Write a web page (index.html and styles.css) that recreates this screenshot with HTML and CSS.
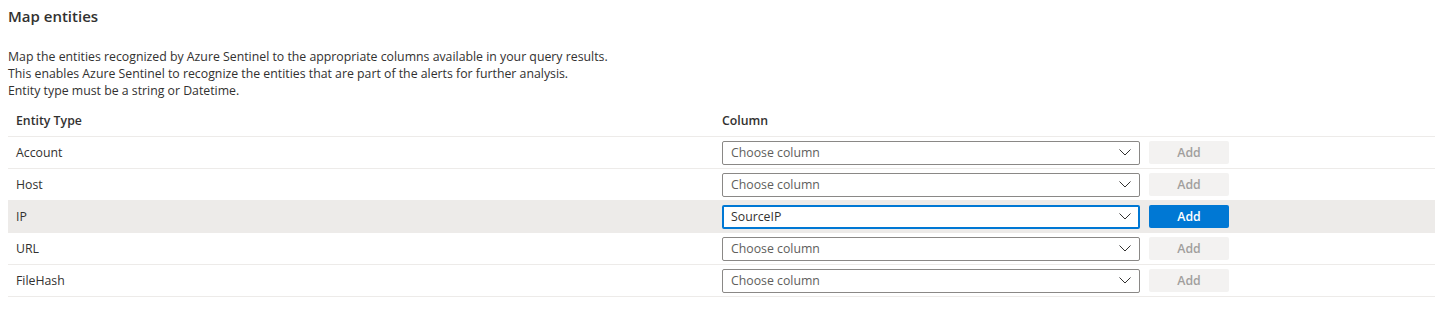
FILE: index.html
```html
<!DOCTYPE html>
<html lang="en">
<head>
    <meta charset="UTF-8">
    <title>Map entities</title>
    <link rel="stylesheet" href="styles.css">
</head>
<body>
    <div class="panel">
        <h2 class="title">Map entities</h2>
        <p class="desc">
            Map the entities recognized by Azure Sentinel to the appropriate columns available in your query results.<br>
            This enables Azure Sentinel to recognize the entities that are part of the alerts for further analysis.<br>
            Entity type must be a string or Datetime.
        </p>
        <div class="grid">
            <div class="row head">
                <div class="cell">Entity Type</div>
                <div class="cell">Column</div>
            </div>
            <div class="row">
                <div class="cell">Account</div>
                <div class="cell picker">
                    <div class="select"><span class="placeholder">Choose column</span><svg class="chev" width="12" height="7" viewBox="0 0 12 7"><path d="M0.5 0.5 L6 6 L11.5 0.5" fill="none" stroke="#323130" stroke-width="1"/></svg></div>
                    <button class="btn" disabled>Add</button>
                </div>
            </div>
            <div class="row">
                <div class="cell">Host</div>
                <div class="cell picker">
                    <div class="select"><span class="placeholder">Choose column</span><svg class="chev" width="12" height="7" viewBox="0 0 12 7"><path d="M0.5 0.5 L6 6 L11.5 0.5" fill="none" stroke="#323130" stroke-width="1"/></svg></div>
                    <button class="btn" disabled>Add</button>
                </div>
            </div>
            <div class="row selected">
                <div class="cell">IP</div>
                <div class="cell picker">
                    <div class="select focused"><span>SourceIP</span><svg class="chev" width="12" height="7" viewBox="0 0 12 7"><path d="M0.5 0.5 L6 6 L11.5 0.5" fill="none" stroke="#323130" stroke-width="1"/></svg></div>
                    <button class="btn primary">Add</button>
                </div>
            </div>
            <div class="row">
                <div class="cell">URL</div>
                <div class="cell picker">
                    <div class="select"><span class="placeholder">Choose column</span><svg class="chev" width="12" height="7" viewBox="0 0 12 7"><path d="M0.5 0.5 L6 6 L11.5 0.5" fill="none" stroke="#323130" stroke-width="1"/></svg></div>
                    <button class="btn" disabled>Add</button>
                </div>
            </div>
            <div class="row">
                <div class="cell">FileHash</div>
                <div class="cell picker">
                    <div class="select"><span class="placeholder">Choose column</span><svg class="chev" width="12" height="7" viewBox="0 0 12 7"><path d="M0.5 0.5 L6 6 L11.5 0.5" fill="none" stroke="#323130" stroke-width="1"/></svg></div>
                    <button class="btn" disabled>Add</button>
                </div>
            </div>
        </div>
    </div>
</body>
</html>
```

FILE: styles.css
```css
/* Reset */
* {
    margin: 0;
    padding: 0;
    box-sizing: border-box;
}

body {
    background: #fff;
    color: #323130;
    font-family: 'Open Sans', 'Noto Sans', sans-serif;
    font-size: 12.3px;
    padding: 0 13px 0 8px;
}

/* Heading */
.title {
    font-size: 15px;
    font-weight: 600;
    line-height: 20px;
    padding-top: 6px;
}

.desc {
    margin-top: 22px;
    line-height: 17px;
}

/* Mapping table */
.grid {
    margin-top: 6px;
}

.row {
    display: grid;
    grid-template-columns: 706px 1fr;
    align-items: center;
    height: 32px;
    padding-left: 8px;
    border-bottom: 1px solid #edebe9;
}

.row.head {
    font-weight: 600;
}

.row.selected {
    background: #edebe9;
}

.picker {
    display: flex;
    align-items: center;
    gap: 9px;
}

/* Dropdown */
.select {
    width: 418px;
    height: 24px;
    border: 1px solid #8a8886;
    border-radius: 2px;
    background: #fff;
    display: flex;
    align-items: center;
    justify-content: space-between;
    padding: 0 8px 0 8px;
}

.select .placeholder {
    color: #605e5c;
}

.select.focused {
    border: 2px solid #0078d4;
    padding-left: 7px;
    padding-right: 7px;
}

.chev {
    display: block;
}

/* Add button */
.btn {
    width: 80px;
    height: 23px;
    border: none;
    border-radius: 2px;
    font-family: inherit;
    font-size: 12.3px;
    font-weight: 600;
    background: #f3f2f1;
    color: #a19f9d;
}

.btn.primary {
    background: #0078d4;
    color: #fff;
}
```
